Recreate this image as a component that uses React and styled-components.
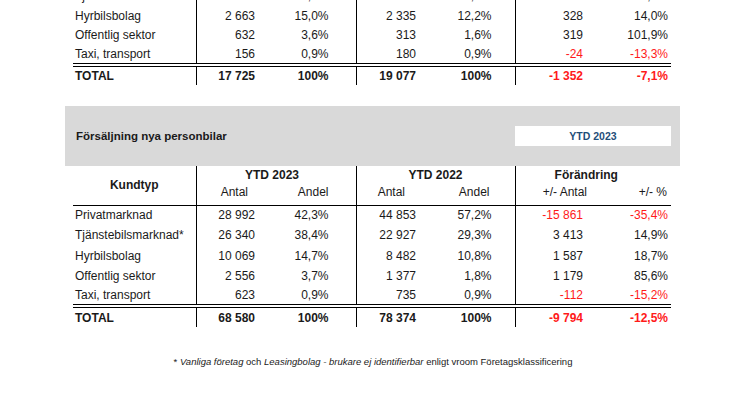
import styled, { createGlobalStyle } from "styled-components"

const GlobalStyle = createGlobalStyle`
    body {
        margin: 0;
        background: #fff;
        font-family: "Liberation Sans", Arial, sans-serif;
        color: #1a1a1a;
    }
`
const Page = styled.div`
    width: 746px;
    height: 419px;
    overflow: hidden;
    display: flex;
    flex-direction: column;
`
const Table = styled.table`
    border-collapse: collapse;
    table-layout: fixed;
    width: 598px;
    margin-left: 73px;
    margin-top: ${p => p.$mt || 0}px;
    font-size: 12px;
`
const Row = styled.tr`
    height: ${p => p.$h || 19.75}px;
`
const TotalRow = styled.tr`
    height: ${p => p.$h || 20}px;
    font-weight: 700;

    td {
        border-top: 4px double #000;
    }
`
const Cell = styled.td`
    padding: 0 ${p => p.$pr || 0}px 0 ${p => p.$pl || 0}px;
    text-align: ${p => p.$align || "right"};
    color: ${p => (p.$neg ? "#ff1a1a" : "inherit")};
    border-right: ${p => (p.$divider ? "1px solid #000" : "none")};
    white-space: nowrap;
    line-height: 14px;
`
const HeadCell = styled.th`
    padding: 0 ${p => p.$pr || 0}px ${p => p.$pb || 0}px ${p => p.$pl || 0}px;
    text-align: ${p => p.$align || "center"};
    font-weight: ${p => (p.$light ? 400 : 700)};
    border-right: ${p => (p.$divider ? "1px solid #000" : "none")};
    border-bottom: ${p => (p.$bottom ? "1px solid #000" : "none")};
    vertical-align: ${p => p.$valign || "middle"};
    white-space: nowrap;
    line-height: 14px;
`
const Band = styled.div`
    display: flex;
    align-items: center;
    justify-content: space-between;
    margin: 21px 0 0 65px;
    width: 615px;
    height: 60px;
    padding: 0 9px 0 11px;
    box-sizing: border-box;
    background: #d9d9d9;
`
const Title = styled.h2`
    margin: 0;
    font-size: 11.5px;
    font-weight: 700;
    color: #1a1a1a;
`
const PeriodBox = styled.div`
    display: flex;
    align-items: center;
    justify-content: center;
    width: 156px;
    height: 20px;
    background: #fff;
    color: #1f4e79;
    font-size: 10.5px;
    font-weight: 700;
`
const Note = styled.p`
    margin: 29px 0 0;
    text-align: center;
    font-size: 9.5px;
    color: #1a1a1a;

    em {
        font-style: italic;
    }
`

// paddings per kolumn: [kundtyp, antal, andel, antal, andel, +/- antal, +/- %]
const pad = [0, 11, 27, 10, 23, 12, 3]

const Kolumner = () => (
    <colgroup>
        <col style={{ width: 123 }} />
        <col style={{ width: 70 }} />
        <col style={{ width: 90 }} />
        <col style={{ width: 70 }} />
        <col style={{ width: 89 }} />
        <col style={{ width: 80 }} />
        <col style={{ width: 76 }} />
    </colgroup>
)

const isNeg = v => v.startsWith("-")

const Celler = ({ rad }) => (
    <>
        <Cell $align="left" $pl={2} $divider>{rad[0]}</Cell>
        <Cell $pr={pad[1]}>{rad[1]}</Cell>
        <Cell $pr={pad[2]} $divider>{rad[2]}</Cell>
        <Cell $pr={pad[3]}>{rad[3]}</Cell>
        <Cell $pr={pad[4]} $divider>{rad[4]}</Cell>
        <Cell $pr={pad[5]} $neg={isNeg(rad[5])}>{rad[5]}</Cell>
        <Cell $pr={pad[6]} $neg={isNeg(rad[6])}>{rad[6]}</Cell>
    </>
)

const manad = [
    ["Tjänstebilsmarknad*", "6 674", "37,7%", "6 006", "31,5%", "668", "11,1%"],
    ["Hyrbilsbolag", "2 663", "15,0%", "2 335", "12,2%", "328", "14,0%"],
    ["Offentlig sektor", "632", "3,6%", "313", "1,6%", "319", "101,9%"],
    ["Taxi, transport", "156", "0,9%", "180", "0,9%", "-24", "-13,3%"],
]
const manadTotal = ["TOTAL", "17 725", "100%", "19 077", "100%", "-1 352", "-7,1%"]

const ytd = [
    ["Privatmarknad", "28 992", "42,3%", "44 853", "57,2%", "-15 861", "-35,4%"],
    ["Tjänstebilsmarknad*", "26 340", "38,4%", "22 927", "29,3%", "3 413", "14,9%"],
    ["Hyrbilsbolag", "10 069", "14,7%", "8 482", "10,8%", "1 587", "18,7%"],
    ["Offentlig sektor", "2 556", "3,7%", "1 377", "1,8%", "1 179", "85,6%"],
    ["Taxi, transport", "623", "0,9%", "735", "0,9%", "-112", "-15,2%"],
]
const ytdTotal = ["TOTAL", "68 580", "100%", "78 374", "100%", "-9 794", "-12,5%"]

const App = () => {
    return (
        <Page>
            <GlobalStyle />
            <Table $mt={-14}>
                <Kolumner />
                <tbody>
                    {manad.map(rad => <Row key={rad[0]}><Celler rad={rad} /></Row>)}
                    <TotalRow><Celler rad={manadTotal} /></TotalRow>
                </tbody>
            </Table>

            <Band>
                <Title>Försäljning nya personbilar</Title>
                <PeriodBox>YTD 2023</PeriodBox>
            </Band>

            <Table>
                <Kolumner />
                <thead>
                    <Row $h={16}>
                        <HeadCell rowSpan={2} $divider $bottom>Kundtyp</HeadCell>
                        <HeadCell colSpan={2} $divider $pr={8} $valign="bottom">YTD 2023</HeadCell>
                        <HeadCell colSpan={2} $divider $valign="bottom">YTD 2022</HeadCell>
                        <HeadCell colSpan={2} $pr={14} $valign="bottom">Förändring</HeadCell>
                    </Row>
                    <Row $h={23}>
                        <HeadCell $light $bottom $align="right" $pr={18} $pb={2}>Antal</HeadCell>
                        <HeadCell $light $bottom $divider $align="right" $pr={27} $pb={2}>Andel</HeadCell>
                        <HeadCell $light $bottom $align="right" $pr={21} $pb={2}>Antal</HeadCell>
                        <HeadCell $light $bottom $divider $align="right" $pr={25} $pb={2}>Andel</HeadCell>
                        <HeadCell $light $bottom $align="right" $pr={8} $pb={2}>+/- Antal</HeadCell>
                        <HeadCell $light $bottom $align="right" $pr={4} $pb={2}>+/- %</HeadCell>
                    </Row>
                </thead>
                <tbody>
                    {ytd.map(rad => <Row key={rad[0]} $h={20.25}><Celler rad={rad} /></Row>)}
                    <TotalRow $h={21}><Celler rad={ytdTotal} /></TotalRow>
                </tbody>
            </Table>

            <Note>
                * <em>Vanliga företag</em> och <em>Leasingbolag - brukare ej identifierbar</em> enligt vroom Företagsklassificering
            </Note>
        </Page>
    )
}

export default App
